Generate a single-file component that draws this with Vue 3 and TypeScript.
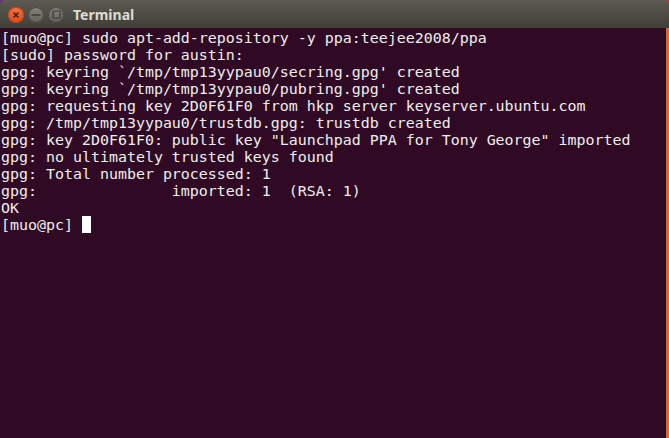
<script setup lang="ts">
const lines: string[] = [
  "[muo@pc] sudo apt-add-repository -y ppa:teejee2008/ppa",
  "[sudo] password for austin:",
  "gpg: keyring `/tmp/tmp13yypau0/secring.gpg' created",
  "gpg: keyring `/tmp/tmp13yypau0/pubring.gpg' created",
  "gpg: requesting key 2D0F61F0 from hkp server keyserver.ubuntu.com",
  "gpg: /tmp/tmp13yypau0/trustdb.gpg: trustdb created",
  "gpg: key 2D0F61F0: public key \"Launchpad PPA for Tony George\" imported",
  "gpg: no ultimately trusted keys found",
  "gpg: Total number processed: 1",
  "gpg:               imported: 1  (RSA: 1)",
  "OK",
];
</script>

<template>
  <div class="window">
    <header class="titlebar">
      <div class="controls">
        <span class="btn close">
          <svg width="8" height="8" viewBox="0 0 8 8"><path d="M1.5 1.5l5 5M6.5 1.5l-5 5" stroke="#4a1a08" stroke-width="1.5" fill="none" /></svg>
        </span>
        <span class="btn">
          <svg width="10" height="8" viewBox="0 0 10 8"><path d="M0.5 4h9" stroke="#3a3a36" stroke-width="1.5" fill="none" /></svg>
        </span>
        <span class="btn">
          <svg width="9" height="9" viewBox="0 0 9 9"><rect x="1" y="1" width="7" height="7" rx="0.5" stroke="#3a3a36" stroke-width="1.2" fill="none" /></svg>
        </span>
      </div>
      <span class="title">Terminal</span>
    </header>
    <div class="body">
      <div class="term">
        <div v-for="(l, i) in lines" :key="i" class="line">{{ l }}</div>
        <div class="line prompt">[muo@pc] <span class="cursor"></span></div>
      </div>
      <div class="edge"></div>
    </div>
  </div>
</template>

<style>
html, body { margin: 0; background: #300a24; overflow: hidden; }
</style>

<style scoped>
.window {
  display: flex;
  flex-direction: column;
  width: 669px;
  height: 438px;
  overflow: hidden;
  background: linear-gradient(90deg, #6d2a7a 50%, #a8434a 50%);
}
.titlebar {
  height: 28px;
  flex: none;
  display: flex;
  align-items: center;
  padding: 1px 0 0 8px;
  background: linear-gradient(#5c5a52, #3f3f38);
  border-radius: 5px 5px 0 0;
  box-sizing: border-box;
}
.controls { display: flex; gap: 4px; width: 56px; flex: none; }
.btn {
  width: 16px;
  height: 16px;
  border-radius: 50%;
  display: flex;
  align-items: center;
  justify-content: center;
  background: linear-gradient(#85847c, #5f5e57);
  box-shadow: inset 0 0 0 1px #45443f;
}
.close {
  background: linear-gradient(#f2774a, #d9481c);
  box-shadow: inset 0 0 0 1px #b8441c;
}
.title {
  font: bold 14px "Noto Sans", "Liberation Sans", sans-serif;
  color: #dfdbd2;
  margin-left: 9px;
}
.body { flex: 1; display: flex; min-height: 0; }
.term {
  flex: 1;
  background: #300a24;
  padding: 2px 0 0 1px;
  color: #eeeeec;
  font: 14.95px/17px "DejaVu Sans Mono", monospace;
  white-space: pre;
}
.line { height: 17px; }
.cursor {
  display: inline-block;
  width: 9px;
  height: 17px;
  margin-top: -1px;
  background: #fff;
  vertical-align: top;
}
.edge { width: 3px; flex: none; background: #cf6b40; }
</style>
